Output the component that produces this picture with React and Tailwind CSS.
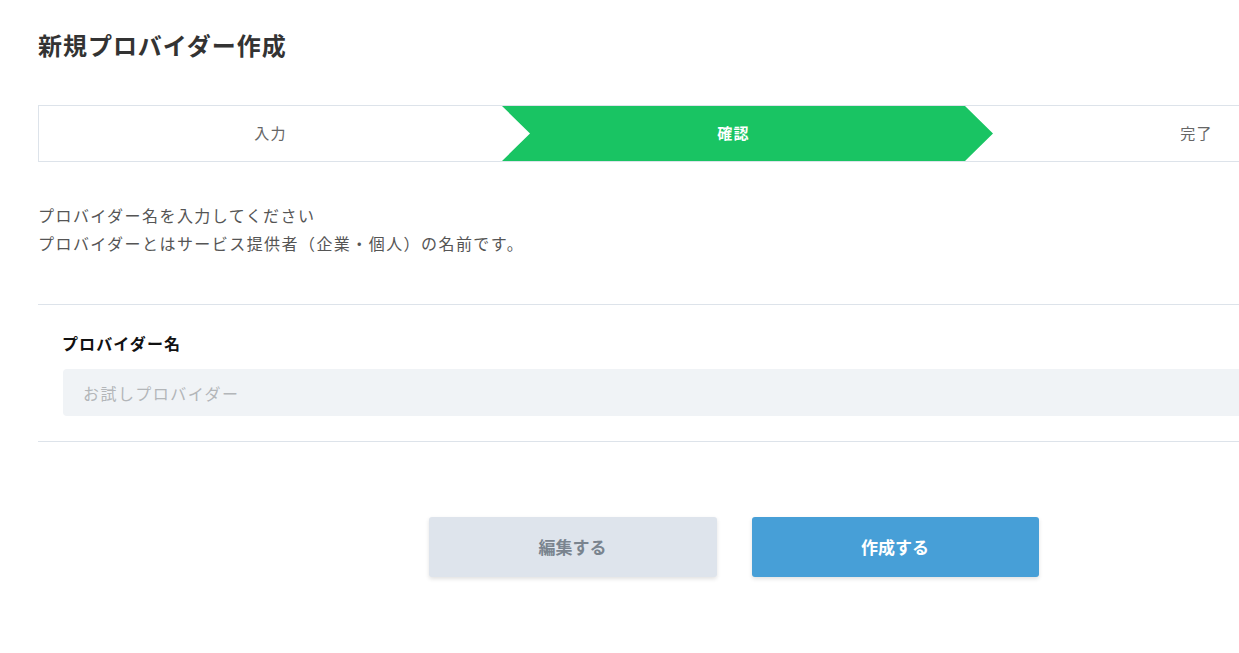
import React from "react";

const font = { fontFamily: '"Noto Sans CJK JP", "Noto Sans", sans-serif' };

const App = () => {
  return (
    <div className="min-h-screen w-full overflow-hidden bg-white" style={font}>
      <div className="ml-[38px] w-[1390px] pt-[29px] pb-20">
        <h1 className="text-[24px] font-bold leading-[32px] tracking-[0.04em] text-[#333333]">
          新規プロバイダー作成
        </h1>

        {/* ステップ */}
        <div className="mt-[44px] flex h-[57px] border-y border-l border-[#dde3ea]">
          <div className="flex w-[463px] items-center justify-center text-[15px] tracking-[0.08em] text-[#666666]">
            入力
          </div>
          <div className="relative z-10 -mr-[28px] flex w-[491px] items-center justify-center bg-[#19c463] pr-[28px] text-[15px] font-bold tracking-[0.08em] text-white [clip-path:polygon(0_0,calc(100%-28px)_0,100%_50%,calc(100%-28px)_100%,0_100%,28px_50%)]">
            確認
          </div>
          <div className="flex w-[463px] items-center justify-center text-[15px] tracking-[0.08em] text-[#666666]">
            完了
          </div>
        </div>

        <div className="mt-[39px] text-[16px] leading-[28px] tracking-[0.09em] text-[#555555]">
          <p>プロバイダー名を入力してください</p>
          <p>プロバイダーとはサービス提供者（企業・個人）の名前です。</p>
        </div>

        <div className="mt-[47px] border-y border-[#dde3ea] px-6 pt-[26px] pb-[25px]">
          <label className="block text-[16px] font-bold leading-[24px] tracking-[0.07em] text-[#111111]">
            プロバイダー名
          </label>
          <div className="mt-[14px] ml-px flex h-[47px] items-center rounded-[4px] bg-[#f0f3f6] px-5 text-[16px] tracking-[0.09em] text-[#b3b6b9]">
            お試しプロバイダー
          </div>
        </div>

        <div className="mt-[75px] ml-px flex justify-center gap-[35px]">
          <button className="flex h-[60px] w-[288px] items-center justify-center rounded-[3px] bg-[#dee4ec] text-[17px] font-bold text-[#7a848f] shadow-[0_2px_4px_rgba(0,0,0,0.12)]">
            編集する
          </button>
          <button className="flex h-[60px] w-[287px] items-center justify-center rounded-[3px] bg-[#479fd7] text-[17px] font-bold text-white shadow-[0_2px_4px_rgba(0,0,0,0.12)]">
            作成する
          </button>
        </div>
      </div>
    </div>
  );
};

export default App;
